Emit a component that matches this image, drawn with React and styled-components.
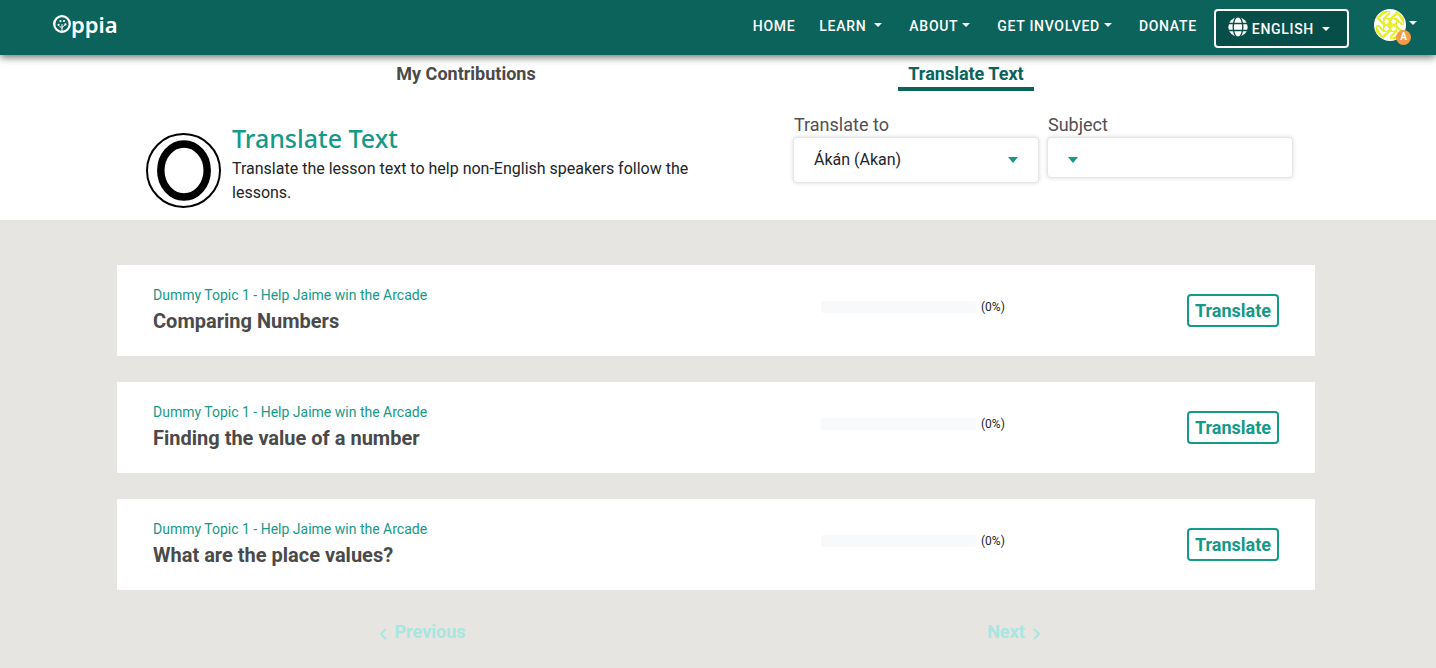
import React from 'react';
import styled, { createGlobalStyle } from 'styled-components';

const GlobalStyle = createGlobalStyle`
  *, *::before, *::after { box-sizing: border-box; }
  body {
    margin: 0;
    background: #e6e5e1;
    color: #212529;
    font-family: Roboto, "Liberation Sans", sans-serif;
    font-size: 16px;
    line-height: 24px;
  }
  h1, h2, p, ul { margin: 0; padding: 0; }
  button, select { font: inherit; }
`;

const teal = '#159988';
const darkTeal = '#0b635b';

const NavBar = styled.header`
  position: relative;
  z-index: 1;
  display: flex;
  align-items: flex-start;
  justify-content: space-between;
  height: 55px;
  padding: 0 19px 0 53px;
  background: ${darkTeal};
  box-shadow: 0 2px 8px rgba(0, 0, 0, 0.6);
`;

const LogoLink = styled.a`
  display: flex;
  align-items: flex-start;
  padding-top: 9px;
  color: #fff;
  font-family: "Noto Sans", "Open Sans", sans-serif;
  font-size: 22px;
  font-weight: 600;
  line-height: 30px;
  text-decoration: none;
`;

const LogoMark = styled.svg`
  width: 18px;
  height: 18px;
  margin-top: 6px;
`;

const NavItems = styled.nav`
  display: flex;
  align-items: flex-start;
`;

const NavList = styled.ul`
  display: flex;
  gap: 24px;
  padding-top: 14px;
  margin-right: 17px;
  list-style: none;
`;

const navText = `
  display: flex;
  align-items: center;
  color: #fff;
  font-size: 14px;
  font-weight: 500;
  letter-spacing: 0.05em;
  line-height: 24px;
`;

const NavLink = styled.a`
  ${navText}
  text-decoration: none;
`;

const NavMenu = styled.button`
  ${navText}
  gap: ${(p) => (p.$wide ? 8 : 4)}px;
  padding: 0 3px 0 0;
  border: 0;
  background: none;
`;

const NavCaret = styled.span`
  border: 4px solid transparent;
  border-top-color: #fff;
  border-bottom: 0;
  margin-bottom: 3px;
`;

const LanguageButton = styled.button`
  ${navText}
  gap: 4px;
  height: 39px;
  margin: 9px 25px 0 0;
  padding: 0 17px 0 12px;
  border: 2px solid #fff;
  border-radius: 4px;
  background: #084e48;

  ${NavCaret} { margin: 0 0 0 4px; }
`;

const GlobeIcon = styled.svg`
  width: 20px;
  height: 20px;
  margin-bottom: 4px;
`;

const ProfileButton = styled.button`
  position: relative;
  display: flex;
  gap: 3px;
  margin-top: 9px;
  padding: 0;
  border: 0;
  background: none;

  ${NavCaret} { margin-top: 12px; }
`;

const Avatar = styled.svg`
  width: 32px;
  height: 32px;
`;

const Badge = styled.span`
  position: absolute;
  top: 21px;
  left: 22px;
  width: 15px;
  height: 15px;
  border-radius: 50%;
  background: #f49b45;
  color: #fff;
  font-size: 10px;
  font-weight: 700;
  line-height: 14px;
  text-align: center;
`;

const TopPanel = styled.section`
  padding: 0 4px 12px 0;
  background: #fff;
`;

const Tabs = styled.div`
  display: grid;
  grid-template-columns: 1fr 1fr;
  justify-items: center;
  max-width: 1000px;
  margin: 0 auto;
`;

const Tab = styled.button`
  padding: 6px 10px 1px;
  border: 0;
  border-bottom: 4px solid ${(p) => (p.$active ? darkTeal : 'transparent')};
  background: none;
  color: ${(p) => (p.$active ? darkTeal : '#4a4a4a')};
  font-size: 18px;
  font-weight: 700;
  line-height: 25px;
`;

const Intro = styled.div`
  display: flex;
  justify-content: space-between;
  max-width: 1198px;
  margin: 0 auto;
  padding: 22px 22px 0 29px;
`;

const IntroText = styled.div`
  display: flex;
  align-items: flex-start;
  gap: 11px;
`;

const IntroIcon = styled.svg`
  flex: none;
  width: 75px;
  height: 75px;
  margin-top: 20px;
`;

const IntroTitle = styled.h1`
  padding: 8px 0 2px;
  color: ${teal};
  font-family: "Noto Sans", "Open Sans", sans-serif;
  font-size: 25px;
  font-weight: 500;
  line-height: 34px;
`;

const IntroCopy = styled.p`
  max-width: 500px;
`;

const Filters = styled.div`
  display: flex;
  gap: 8px;
`;

const Field = styled.div`
  position: relative;
  width: 246px;
`;

const FieldLabel = styled.label`
  display: block;
  padding-left: 1px;
  color: #505050;
  font-size: 18px;
`;

const FieldSelect = styled.select`
  appearance: none;
  display: block;
  width: 100%;
  height: ${(p) => (p.$tall ? 46 : 41)}px;
  padding: 0 20px;
  border: 1px solid #e6e6e6;
  border-radius: 4px;
  background: #fff;
  box-shadow: 0 0 4px rgba(0, 0, 0, 0.15);
  color: #212529;
`;

const FieldCaret = styled.span`
  position: absolute;
  top: 44px;
  ${(p) => (p.$left ? 'left: 21px;' : 'right: 21px;')}
  border: 5px solid transparent;
  border-top: 6px solid ${teal};
  border-bottom: 0;
  pointer-events: none;
`;

const Opportunities = styled.main`
  padding: 45px 4px 0 0;
`;

const CardList = styled.ul`
  display: grid;
  gap: 26px;
  max-width: 1198px;
  margin: 0 auto;
  list-style: none;
`;

const Card = styled.li`
  display: grid;
  grid-template-columns: minmax(0, 1fr) 366px 92px;
  padding: 18px 36px 21px;
  background: #fff;
`;

const CardTopic = styled.p`
  color: ${teal};
  font-size: 14px;
`;

const CardTitle = styled.h2`
  color: #4a4a4a;
  font-size: 20px;
  font-weight: 700;
  line-height: 28px;
`;

const Completion = styled.label`
  display: flex;
  align-items: center;
  gap: 5px;
  height: 24px;
  margin-top: 12px;
  font-size: 12px;
`;

const CompletionBar = styled.progress`
  appearance: none;
  width: 155px;
  height: 12px;
  border: 0;

  &::-webkit-progress-bar { background: #f8f9fa; border-radius: 2px; }
  &::-webkit-progress-value { background: ${teal}; }
`;

const TranslateButton = styled.button`
  align-self: start;
  height: 33px;
  margin-top: 11px;
  padding: 1px 0 0;
  border: 2px solid ${teal};
  border-radius: 4px;
  background: #fff;
  color: ${teal};
  font-size: 18px;
  font-weight: 700;
`;

const Pager = styled.nav`
  display: grid;
  grid-template-columns: 1fr 1fr;
  justify-items: center;
  max-width: 1184px;
  margin: 0 auto;
  padding: 30px 0 24px;
`;

const PagerButton = styled.button`
  display: flex;
  align-items: center;
  gap: 8px;
  padding: 0;
  border: 0;
  background: none;
  color: #a8e6df;
  font-size: 18px;
  font-weight: 700;
`;

const Chevron = styled.svg`
  width: 8px;
  height: 12px;
  margin-top: 4px;
`;

const topics = ['Comparing Numbers', 'Finding the value of a number', 'What are the place values?'];

function PagerChevron({ d }) {
  return (
    <Chevron viewBox="0 0 8 12" fill="none" stroke="currentColor" strokeWidth="2" aria-hidden="true">
      <path d={d} />
    </Chevron>
  );
}

export default function App() {
  return (
    <>
      <GlobalStyle />
      <NavBar>
        <LogoLink href="#home" aria-label="Oppia">
          <LogoMark viewBox="0 0 18 18" fill="none" stroke="#fff" aria-hidden="true">
            <ellipse cx="9" cy="9" rx="7.8" ry="7.8" strokeWidth="2.3" />
            <path d="M9 16V9M9 13.5L6.5 11M9 12.5l3-2.5" strokeWidth="1" />
            <g fill="#fff" stroke="none">
              <circle cx="5.6" cy="9.8" r="1.1" />
              <circle cx="7.5" cy="6.2" r="1.1" />
              <circle cx="11" cy="6" r="1.1" />
              <circle cx="12.4" cy="9.4" r="1.1" />
            </g>
          </LogoMark>
          ppia
        </LogoLink>
        <NavItems aria-label="Main">
          <NavList>
            <li><NavLink href="#home">HOME</NavLink></li>
            <li><NavMenu $wide>LEARN<NavCaret /></NavMenu></li>
            <li><NavMenu>ABOUT<NavCaret /></NavMenu></li>
            <li><NavMenu>GET INVOLVED<NavCaret /></NavMenu></li>
            <li><NavLink href="#donate">DONATE</NavLink></li>
          </NavList>
          <LanguageButton>
            <GlobeIcon viewBox="0 0 20 20" aria-hidden="true">
              <circle cx="10" cy="10" r="9.7" fill="#fff" />
              <g fill="none" stroke="#084e48" strokeWidth="1.3">
                <ellipse cx="10" cy="10" rx="4.8" ry="10.4" />
                <path d="M0 6.5h20M0 13.5h20" />
              </g>
            </GlobeIcon>
            ENGLISH
            <NavCaret />
          </LanguageButton>
          <ProfileButton aria-label="Profile menu">
            <Avatar viewBox="0 0 32 32" aria-hidden="true">
              <defs><clipPath id="avatar-clip"><circle cx="16" cy="16" r="16" /></clipPath></defs>
              <g clipPath="url(#avatar-clip)">
                <path fill="#fff" d="M0 0h32v32H0z" />
                {[0, 90, 180, 270].map((angle) => (
                  <g key={angle} transform={`rotate(${angle} 16 16)`}>
                    <path fill="#e6ee2e" d="M9 9h7v7H9z" />
                    <path fill="#fff" d="M12.5 9.8l2.7 2.7-2.7 2.7-2.7-2.7z" />
                    <path fill="#e6ee2e" d="M9 2h7L9 6zM16 2v3l-4 4H9zM16 9l7-7v4l-4 3zM2 9l7-7v4L5 9z" />
                  </g>
                ))}
              </g>
            </Avatar>
            <NavCaret />
            <Badge>A</Badge>
          </ProfileButton>
        </NavItems>
      </NavBar>
      <TopPanel>
        <Tabs role="tablist">
          <Tab role="tab" aria-selected="false">My Contributions</Tab>
          <Tab role="tab" aria-selected="true" $active>Translate Text</Tab>
        </Tabs>
        <Intro>
          <IntroText>
            <IntroIcon viewBox="0 0 75 75" fill="none" stroke="#000" aria-hidden="true">
              <circle cx="37.5" cy="37.5" r="36.5" strokeWidth="2" />
              <ellipse cx="38" cy="37.5" rx="23.2" ry="26.5" strokeWidth="7.5" />
            </IntroIcon>
            <div>
              <IntroTitle>Translate Text</IntroTitle>
              <IntroCopy>
                Translate the lesson text to help non-English speakers follow the lessons.
              </IntroCopy>
            </div>
          </IntroText>
          <Filters>
            <Field>
              <FieldLabel htmlFor="language">Translate to</FieldLabel>
              <FieldSelect id="language" $tall><option>Ákán (Akan)</option></FieldSelect>
              <FieldCaret />
            </Field>
            <Field>
              <FieldLabel htmlFor="subject">Subject</FieldLabel>
              <FieldSelect id="subject"><option value="" /></FieldSelect>
              <FieldCaret $left />
            </Field>
          </Filters>
        </Intro>
      </TopPanel>
      <Opportunities>
        <CardList>
          {topics.map((title) => (
            <Card key={title}>
              <div>
                <CardTopic>Dummy Topic 1 - Help Jaime win the Arcade</CardTopic>
                <CardTitle>{title}</CardTitle>
              </div>
              <Completion>
                <CompletionBar value={0} max={100} />
                (0%)
              </Completion>
              <TranslateButton>Translate</TranslateButton>
            </Card>
          ))}
        </CardList>
      </Opportunities>
      <Pager aria-label="Pages">
        <PagerButton><PagerChevron d="M7 1L2 6l5 5" />Previous</PagerButton>
        <PagerButton>Next<PagerChevron d="M1 1l5 5-5 5" /></PagerButton>
      </Pager>
    </>
  );
}
